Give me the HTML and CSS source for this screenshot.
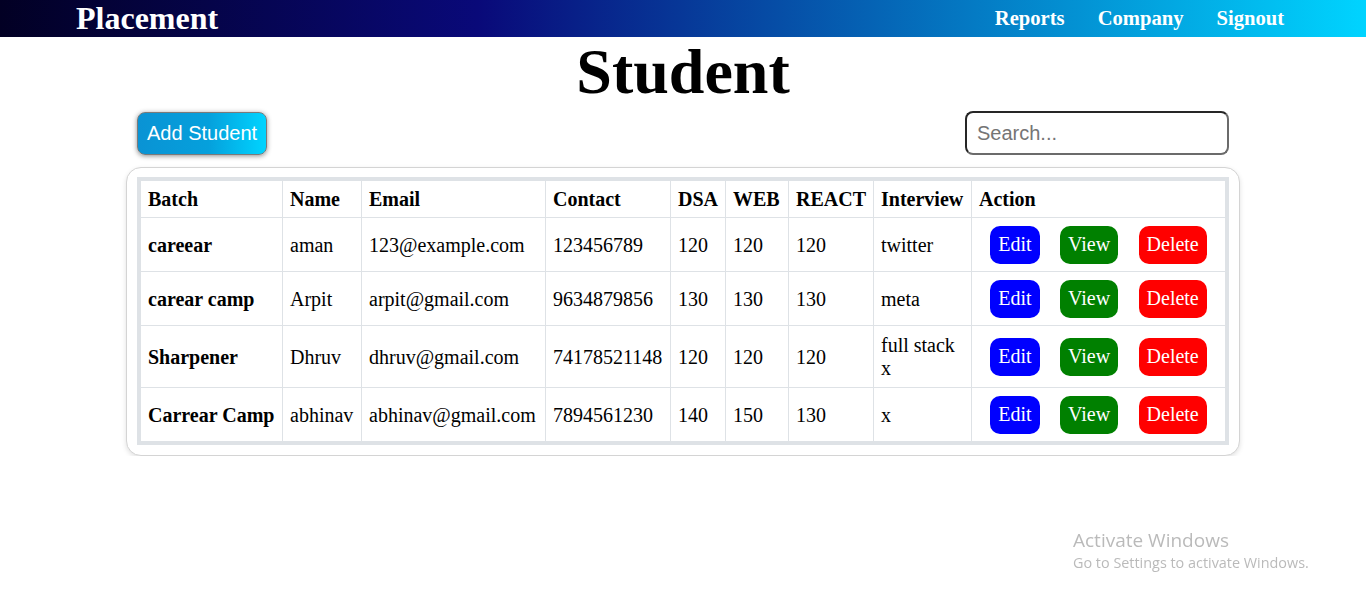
FILE: index.html
```html
<!DOCTYPE html>
<html lang="en">
<head>
<meta charset="utf-8">
<title>Student</title>
<link rel="stylesheet" href="styles.css">
</head>
<body>
<nav class="navbar">
  <span class="brand">Placement</span>
  <div class="nav-links">
    <a href="#">Reports</a>
    <a href="#">Company</a>
    <a href="#">Signout</a>
  </div>
</nav>
<main class="page">
  <h1 class="title">Student</h1>
  <div class="toolbar">
    <button class="add-btn" type="button">Add Student</button>
    <input class="search" type="text" placeholder="Search...">
  </div>
  <div class="card">
    <table class="students">
      <thead>
        <tr>
          <th class="c-batch">Batch</th>
          <th class="c-name">Name</th>
          <th class="c-email">Email</th>
          <th class="c-contact">Contact</th>
          <th class="c-dsa">DSA</th>
          <th class="c-web">WEB</th>
          <th class="c-react">REACT</th>
          <th class="c-int">Interview</th>
          <th class="c-action">Action</th>
        </tr>
      </thead>
      <tbody>
        <tr>
          <td class="batch">careear</td>
          <td>aman</td>
          <td>123@example.com</td>
          <td>123456789</td>
          <td>120</td>
          <td>120</td>
          <td>120</td>
          <td class="wrap">twitter</td>
          <td class="action"><div class="actions"><button class="btn edit">Edit</button><button class="btn view">View</button><button class="btn del">Delete</button></div></td>
        </tr>
        <tr>
          <td class="batch">carear camp</td>
          <td>Arpit</td>
          <td>arpit@gmail.com</td>
          <td>9634879856</td>
          <td>130</td>
          <td>130</td>
          <td>130</td>
          <td class="wrap">meta</td>
          <td class="action"><div class="actions"><button class="btn edit">Edit</button><button class="btn view">View</button><button class="btn del">Delete</button></div></td>
        </tr>
        <tr>
          <td class="batch">Sharpener</td>
          <td>Dhruv</td>
          <td>dhruv@gmail.com</td>
          <td>74178521148</td>
          <td>120</td>
          <td>120</td>
          <td>120</td>
          <td class="wrap">full stack x</td>
          <td class="action"><div class="actions"><button class="btn edit">Edit</button><button class="btn view">View</button><button class="btn del">Delete</button></div></td>
        </tr>
        <tr>
          <td class="batch">Carrear Camp</td>
          <td>abhinav</td>
          <td>abhinav@gmail.com</td>
          <td>7894561230</td>
          <td>140</td>
          <td>150</td>
          <td>130</td>
          <td class="wrap">x</td>
          <td class="action"><div class="actions"><button class="btn edit">Edit</button><button class="btn view">View</button><button class="btn del">Delete</button></div></td>
        </tr>
      </tbody>
    </table>
  </div>
</main>
<div class="watermark">
  <div class="wm-title">Activate Windows</div>
  <div class="wm-sub">Go to Settings to activate Windows.</div>
</div>
</body>
</html>
```
FILE: styles.css
```css
html, body {
  margin: 0;
  padding: 0;
  background: #ffffff;
}

body {
  font-family: "Liberation Serif", "Times New Roman", serif;
  color: #000;
}

.navbar {
  height: 37px;
  display: flex;
  align-items: center;
  justify-content: space-between;
  padding: 0 82px 0 76px;
  background: linear-gradient(90deg, rgb(2, 0, 36) 0%, rgb(9, 9, 121) 35%, rgb(0, 212, 255) 100%);
}

.brand {
  color: #fff;
  font-weight: bold;
  font-size: 32px;
  line-height: 37px;
}

.nav-links {
  display: flex;
  gap: 33px;
}

.nav-links a {
  color: #fff;
  text-decoration: none;
  font-weight: bold;
  font-size: 20.6px;
  line-height: 37px;
}

.page {
  display: flex;
  flex-direction: column;
  align-items: center;
}

.title {
  margin: 0;
  font-size: 64px;
  line-height: 70px;
  font-weight: bold;
  text-align: center;
}

.toolbar {
  width: 1092px;
  margin-top: 4px;
  display: flex;
  justify-content: space-between;
  align-items: flex-end;
}

.add-btn {
  font-family: "Liberation Sans", Arial, sans-serif;
  font-size: 20px;
  line-height: 23px;
  color: #fff;
  white-space: nowrap;
  padding: 9px 9px;
  height: 43px;
  border: 1px solid #7a7a7a;
  border-radius: 8px;
  background: linear-gradient(90deg, #0a93d4 0%, #05a0dc 55%, #00d4ff 100%);
  box-shadow: 0 1px 5px rgba(0, 0, 0, 0.45);
}

.search {
  box-sizing: border-box;
  width: 264px;
  height: 44px;
  padding: 8px 10px;
  font-family: "Liberation Sans", Arial, sans-serif;
  font-size: 20px;
  border: 2px solid;
  border-color: #262626 #6b6b6b #6b6b6b #262626;
  border-radius: 8px;
  outline: none;
}

.search::placeholder {
  color: #757575;
}

.card {
  margin-top: 12px;
  padding: 9px 10px 10px;
  border: 1px solid #d4d4d4;
  border-radius: 15px;
  box-shadow: 0 2px 5px rgba(0, 0, 0, 0.12);
  background: #fff;
}

.students {
  width: 1092px;
  table-layout: fixed;
  border-collapse: separate;
  border-spacing: 0;
  border: 4px solid #dee2e6;
  font-size: 20px;
  line-height: 23px;
}

.students th,
.students td {
  box-sizing: border-box;
  text-align: left;
  white-space: nowrap;
  border-right: 1px solid #dee2e6;
  border-bottom: 1px solid #dee2e6;
  vertical-align: middle;
}

.students th {
  padding: 7px 7px 6px;
  font-weight: bold;
}

.students td {
  padding: 8px 7px 7px;
}

.students th:last-child,
.students td:last-child {
  border-right: none;
}

.students tbody tr:last-child td {
  border-bottom: none;
}

.c-batch { width: 142px; }
.c-name { width: 79px; }
.c-email { width: 184px; }
.c-contact { width: 125px; }
.c-dsa { width: 55px; }
.c-web { width: 63px; }
.c-react { width: 85px; }
.c-int { width: 98px; }

.students td.batch {
  font-weight: bold;
}

.students td.wrap {
  white-space: normal;
}

.students td.action {
  padding: 7.5px 8px;
}

.actions {
  display: flex;
  justify-content: space-around;
  align-items: center;
}

.btn {
  font-family: "Liberation Serif", "Times New Roman", serif;
  font-size: 20px;
  line-height: 23px;
  color: #fff;
  border: none;
  border-radius: 10px;
  padding: 7.5px 8px;
  cursor: pointer;
}

.btn.edit { background: #0000ff; }
.btn.view { background: #008000; }
.btn.del { background: #ff0000; }

.watermark {
  position: fixed;
  left: 1073px;
  top: 527px;
  font-family: "Open Sans", "Noto Sans", sans-serif;
  color: rgba(140, 140, 140, 0.6);
  pointer-events: none;
}

.wm-title {
  font-size: 19px;
  line-height: 26px;
}

.wm-sub {
  font-size: 14.4px;
  line-height: 20px;
}
```
